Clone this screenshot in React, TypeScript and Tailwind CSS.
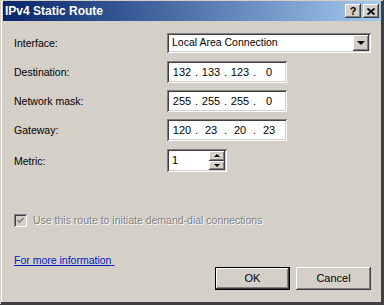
import { Fragment } from "react";

// classic win2000 bevels
const raised =
  "shadow-[inset_-1px_-1px_#404040,inset_1px_1px_#ffffff,inset_-2px_-2px_#808080,inset_2px_2px_#d4d0c8]";
const sunken =
  "shadow-[inset_1px_1px_#808080,inset_-1px_-1px_#ffffff,inset_2px_2px_#404040,inset_-2px_-2px_#d4d0c8]";

const IpField = ({ parts }: { parts: string[] }) => (
  <div className={`flex items-center w-[120px] h-full bg-white pl-[4px] text-[11px] ${sunken}`}>
    {parts.map((p, i) => (
      <Fragment key={i}>
        {i > 0 && <span className="w-[7px] text-center">.</span>}
        <span className="w-[22px] text-center">{p}</span>
      </Fragment>
    ))}
  </div>
);

const Row = ({ label, className, children }: { label: string; className: string; children: React.ReactNode }) => (
  <div className={`flex items-center ${className}`}>
    <span className="w-[153px] pt-[2px]">{label}</span>
    {children}
  </div>
);

export default function App() {
  return (
    <div className="w-[384px] h-[305px] bg-[#d4d0c8] flex flex-col text-[10.5px] text-black font-['Liberation_Sans',Arial,sans-serif] shadow-[inset_-1px_-1px_#404040,inset_1px_1px_#d4d0c8,inset_-3px_-3px_#404040,inset_2px_2px_#ffffff]">
      {/* Title bar */}
      <div className="mx-[3px] mt-[1px] h-[20px] flex items-center justify-between pl-[2px] pr-[2px] bg-linear-to-r from-[#0a246a] to-[#a6caf0]">
        <span className="text-white font-bold text-[12px]">IPv4 Static Route</span>
        <div className="flex gap-[2px]">
          <button className={`w-[16px] h-[14px] bg-[#d4d0c8] flex items-center justify-center font-bold text-[11px] leading-none ${raised}`}>
            ?
          </button>
          <button className={`w-[16px] h-[14px] bg-[#d4d0c8] flex items-center justify-center ${raised}`}>
            <svg width="8" height="7" viewBox="0 0 8 7">
              <path d="M0.5 0.5 L7.5 6.5 M7.5 0.5 L0.5 6.5" stroke="#000" strokeWidth="1.8" />
            </svg>
          </button>
        </div>
      </div>

      <div className="flex flex-col pl-[14px] pr-[13px]">
        <Row label="Interface:" className="mt-[12px] h-[20px]">
          <div className={`flex items-center w-[204px] h-full bg-white p-[2px] ${sunken}`}>
            <span className="flex-1 pl-[3px]">Local Area Connection</span>
            <div className={`w-[16px] h-full bg-[#d4d0c8] flex items-center justify-center ${raised}`}>
              <div className="w-0 h-0 border-x-[4px] border-x-transparent border-t-[4px] border-t-black" />
            </div>
          </div>
        </Row>
        <Row label="Destination:" className="mt-[8px] h-[22px]">
          <IpField parts={["132", "133", "123", "0"]} />
        </Row>
        <Row label="Network mask:" className="mt-[7px] h-[22px]">
          <IpField parts={["255", "255", "255", "0"]} />
        </Row>
        <Row label="Gateway:" className="mt-[7px] h-[22px]">
          <IpField parts={["120", "23", "20", "23"]} />
        </Row>
        <Row label="Metric:" className="mt-[8px] h-[23px]">
          <div className={`flex w-[60px] h-full bg-white p-[2px] ${sunken}`}>
            <span className="flex-1 pl-[3px] self-center text-[11px]">1</span>
            <div className="w-[16px] flex flex-col">
              <div className={`flex-1 bg-[#d4d0c8] flex items-center justify-center ${raised}`}>
                <div className="w-0 h-0 border-x-[3px] border-x-transparent border-b-[3px] border-b-black" />
              </div>
              <div className={`flex-1 bg-[#d4d0c8] flex items-center justify-center ${raised}`}>
                <div className="w-0 h-0 border-x-[3px] border-x-transparent border-t-[3px] border-t-black" />
              </div>
            </div>
          </div>
        </Row>

        {/* disabled checkbox */}
        <div className="flex items-center mt-[41px] h-[14px]">
          <div className={`w-[13px] h-[13px] bg-[#d4d0c8] flex items-center justify-center ${sunken}`}>
            <svg width="7" height="7" viewBox="0 0 7 7">
              <path d="M0.5 3 L2.5 5 L6.5 1" stroke="#808080" strokeWidth="1.6" fill="none" />
            </svg>
          </div>
          <span className="ml-[6px] pt-[1px] text-[#808080] [text-shadow:1px_1px_0_#ffffff]">
            Use this route to initiate demand-dial connections
          </span>
        </div>

        <div className="mt-[27px] h-[13px] flex items-center">
          <a href="#" className="text-[#0020c0] underline whitespace-pre">
            For more information{" "}
          </a>
        </div>

        <div className="flex justify-end gap-[6px] h-[23px]">
          <button className="w-[75px] h-full bg-[#d4d0c8] text-[11px] shadow-[inset_0_0_0_1px_#000000,inset_-2px_-2px_#404040,inset_2px_2px_#ffffff,inset_-3px_-3px_#808080]">
            OK
          </button>
          <button className={`w-[75px] h-full bg-[#d4d0c8] text-[11px] ${raised}`}>Cancel</button>
        </div>
      </div>
    </div>
  );
}
